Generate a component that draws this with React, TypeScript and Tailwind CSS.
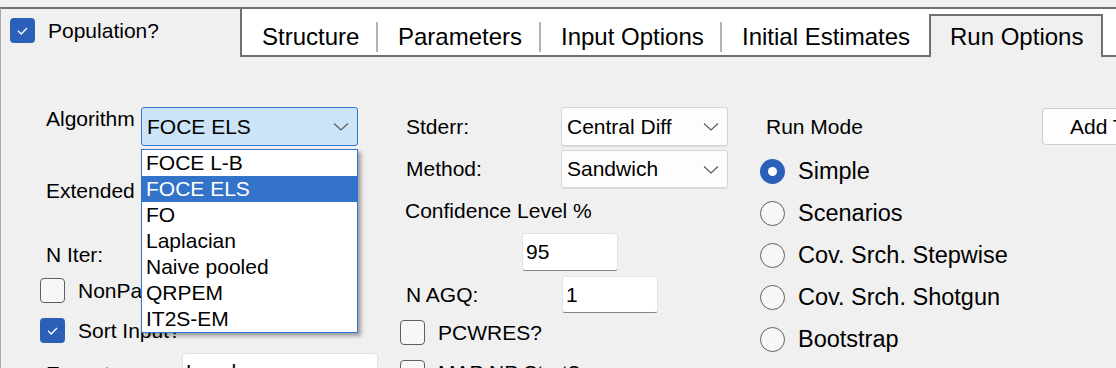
import React from 'react'

function Check({ checked }: { checked?: boolean }) {
  if (checked) {
    return (
      <span className="flex h-[25px] w-[25px] flex-none items-center justify-center rounded-[4px] bg-[#2b60b8]">
        <svg width="25" height="25" viewBox="0 0 25 25">
          <path d="M8 12.8l3.2 3.2 5.8-6" fill="none" stroke="#fff" strokeWidth="1.3" />
        </svg>
      </span>
    )
  }
  return <span className="block h-[25px] w-[25px] flex-none rounded-[4px] border-[1.5px] border-[#5f5f5f] bg-[#f7f7f7]" />
}

function Radio({ on }: { on?: boolean }) {
  if (on) {
    return (
      <span className="flex h-[25px] w-[25px] flex-none items-center justify-center rounded-full bg-[#2b60b8]">
        <span className="block h-[9px] w-[9px] rounded-full bg-white" />
      </span>
    )
  }
  return <span className="block h-[25px] w-[25px] flex-none rounded-full border-[1.5px] border-[#5f5f5f] bg-[#f7f7f7]" />
}

function Chevron() {
  return (
    <svg width="16" height="9" viewBox="0 0 16 9">
      <path d="M1 1.5l7 6.5 7-6.5" fill="none" stroke="#5a5a5a" strokeWidth="1.2" />
    </svg>
  )
}

function Select({ value, focused, className }: { value: string; focused?: boolean; className: string }) {
  const look = focused
    ? 'border-[#2f78d0] bg-[#cce4f7]'
    : 'border-[#d6d6d6] bg-[#fdfdfd] shadow-[0_1px_0_rgba(0,0,0,0.08)]'
  return (
    <div className={`flex items-center justify-between rounded-[3px] border pl-[5px] pr-[8px] ${look} ${className}`}>
      <span className="leading-[24px]">{value}</span>
      <Chevron />
    </div>
  )
}

function TextBox({ value, className }: { value: string; className: string }) {
  return (
    <div className={`flex items-center rounded-[3px] border border-[#e3e3e3] border-b-[#858585] bg-white pl-[3px] ${className}`}>
      <span className="leading-[24px]">{value}</span>
    </div>
  )
}

const tabs = [
  { label: 'Structure', w: 'w-[134px]' },
  { label: 'Parameters', w: 'w-[161px]' },
  { label: 'Input Options', w: 'w-[179px]' },
  { label: 'Initial Estimates', w: 'w-[207px]' },
]

const algorithms = ['FOCE L-B', 'FOCE ELS', 'FO', 'Laplacian', 'Naive pooled', 'QRPEM', 'IT2S-EM']

const modes = ['Simple', 'Scenarios', 'Cov. Srch. Stepwise', 'Cov. Srch. Shotgun', 'Bootstrap', 'Profile']

export default function App() {
  return (
    <div className="relative h-[368px] w-[1116px] overflow-hidden bg-[#f0f0f0] pt-[7px] font-['Liberation_Sans',Arial,sans-serif] text-[21px] text-black">
      <div className="h-full border-l border-t-2 border-l-[#a9a9a9] border-t-[#6f6f6f]">
        {/* header: population checkbox + tab strip */}
        <div className="flex h-[48px]">
          <div className="flex w-[239px] flex-none items-start gap-[13px] pl-[9px] pt-[9px]">
            <Check checked />
            <span className="leading-[25px]">Population?</span>
          </div>
          <div className="flex flex-1 border-l-2 border-[#6f6f6f]">
            <div className="flex items-center border-b-2 border-[#6f6f6f] bg-white pt-[10px]">
              {tabs.map((t, i) => (
                <div key={t.label} className="flex items-center">
                  <div className={`pl-[20px] text-[24px] leading-[28px] ${t.w}`}>{t.label}</div>
                  {i < 3 && <div className="h-[30px] w-[2px] bg-[#b4b4b4]" />}
                </div>
              ))}
            </div>
            <div className="bg-white pt-[5px]">
              <div className="h-[43px] w-[174px] border-2 border-b-0 border-[#6f6f6f] bg-[#f0f0f0] pl-[19px] pt-[7px] text-[24px] leading-[28px]">
                Run Options
              </div>
            </div>
            <div className="flex-1 border-b-2 border-[#6f6f6f] bg-white" />
          </div>
        </div>

        {/* body */}
        <div className="flex">
          {/* left column */}
          <div className="flex w-[399px] flex-none flex-col">
            <div className="mt-[50px] flex h-[39px] items-start pl-[45px]">
              <span className="w-[95px] leading-[24px]">Algorithm</span>
              <Select value="FOCE ELS" focused className="h-[39px] w-[217px]" />
            </div>
            <div className="mt-[33px] h-[24px] pl-[45px] leading-[24px]">Extended Grid?</div>
            <div className="mt-[40px] h-[24px] pl-[45px] leading-[24px]">N Iter:</div>
            <div className="mt-[11px] flex items-center gap-[13px] pl-[39px]">
              <Check />
              <span className="leading-[24px]">NonParametric?</span>
            </div>
            <div className="mt-[15px] flex items-center gap-[13px] pl-[39px]">
              <Check checked />
              <span className="leading-[24px]">Sort Input?</span>
            </div>
            <div className="mt-[10px] flex items-start pl-[45px]">
              <span className="w-[136px] pt-[9px] leading-[24px]">Execute on:</span>
              <TextBox value="Local" className="h-[38px] w-[196px]" />
            </div>
          </div>

          {/* middle column */}
          <div className="flex w-[360px] flex-none flex-col">
            <div className="mt-[50px] flex h-[39px] items-center">
              <span className="w-[161px] pl-[6px] leading-[24px]">Stderr:</span>
              <Select value="Central Diff" className="h-[39px] w-[167px]" />
            </div>
            <div className="mt-[4px] flex h-[38px] items-center">
              <span className="w-[161px] pl-[6px] leading-[24px]">Method:</span>
              <Select value="Sandwich" className="h-[38px] w-[167px]" />
            </div>
            <div className="mt-[11px] pl-[5px] leading-[24px]">Confidence Level %</div>
            <div className="mt-[10px] pl-[122px]">
              <TextBox value="95" className="h-[38px] w-[96px]" />
            </div>
            <div className="mt-[5px] flex h-[37px] items-center">
              <span className="w-[162px] pl-[6px] leading-[24px]">N AGQ:</span>
              <TextBox value="1" className="h-[37px] w-[96px]" />
            </div>
            <div className="mt-[7px] flex items-center gap-[13px]">
              <Check />
              <span className="leading-[24px]">PCWRES?</span>
            </div>
            <div className="mt-[15px] flex items-center gap-[13px]">
              <Check />
              <span className="leading-[24px]">MAP NP Start?</span>
            </div>
          </div>

          {/* right column */}
          <div className="flex flex-1 flex-col">
            <div className="mt-[50px] flex h-[39px] items-center">
              <span className="w-[282px] flex-none pl-[6px] leading-[24px]">Run Mode</span>
              <div className="flex h-[37px] w-[130px] flex-none items-center rounded-[4px] border border-[#cdcdcd] bg-[#fdfdfd] pl-[27px] leading-[24px]">
                Add Table
              </div>
            </div>
            <div className="mt-[4px] flex flex-col">
              {modes.map((m, i) => (
                <div key={m} className="flex h-[42px] items-center gap-[13px]">
                  <Radio on={i === 0} />
                  <span className="text-[23.5px] leading-[28px]">{m}</span>
                </div>
              ))}
            </div>
          </div>
        </div>
      </div>

      {/* open algorithm dropdown */}
      <div className="absolute left-[141px] top-[149px] w-[217px] border border-[#2f78d0] bg-white shadow-[3px_3px_4px_rgba(0,0,0,0.35)]">
        {algorithms.map((a) => (
          <div
            key={a}
            className={a === 'FOCE ELS' ? 'h-[26px] bg-[#3373c9] pl-[4px] leading-[26px] text-white' : 'h-[26px] pl-[4px] leading-[26px]'}
          >
            {a}
          </div>
        ))}
      </div>
    </div>
  )
}
